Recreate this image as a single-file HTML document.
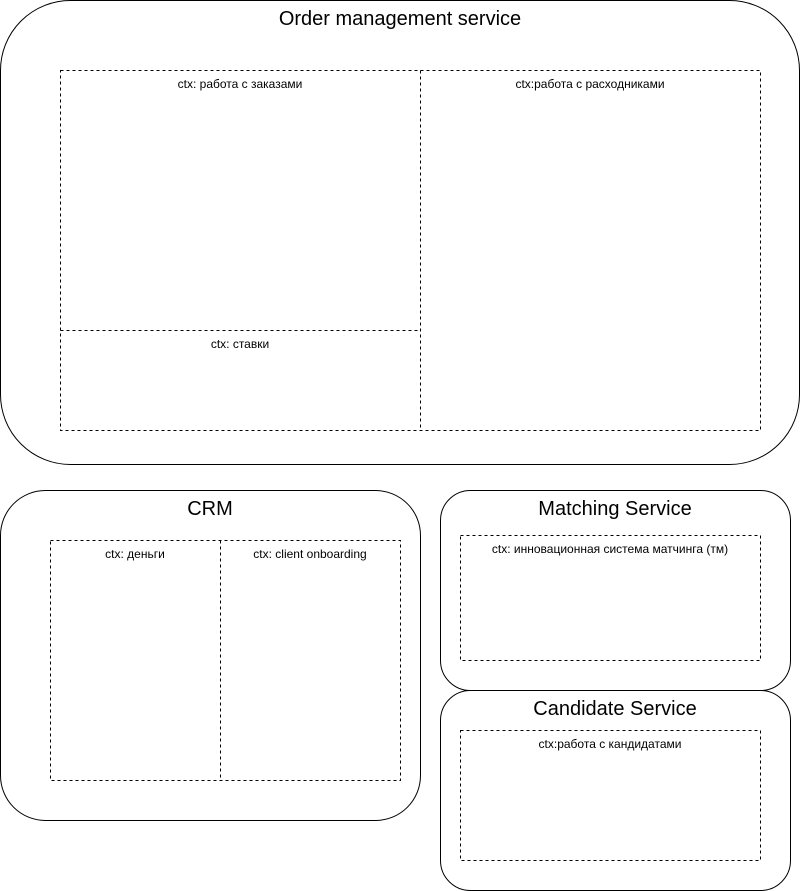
<!DOCTYPE html>
<html><head><meta charset="utf-8"><style>
html,body{margin:0;padding:0;background:#fff;}
svg{display:block;}
text{font-family:"Liberation Sans","DejaVu Sans",sans-serif;fill:#000;}
.t{font-size:20px;}
.s{font-size:12px;}
</style></head><body>
<svg width="801" height="891" viewBox="0 0 801 891" xmlns="http://www.w3.org/2000/svg">
<g fill="none" stroke="#000" stroke-width="1">
<rect x="0.5" y="0.5" width="799" height="464" rx="70" ry="70"/>
<g stroke-dasharray="3,3">
<rect x="60.5" y="70.5" width="700" height="360"/>
<line x1="420.5" y1="70.5" x2="420.5" y2="430.5"/>
<line x1="60.5" y1="330.5" x2="420.5" y2="330.5"/>
</g>
<rect x="0.5" y="490.5" width="420" height="330" rx="45" ry="45"/>
<g stroke-dasharray="3,3">
<rect x="50.5" y="540.5" width="350" height="240"/>
<line x1="220.5" y1="540.5" x2="220.5" y2="780.5"/>
</g>
<rect x="440.5" y="490.5" width="350" height="200" rx="30" ry="30"/>
<rect x="460.5" y="535.5" width="300" height="125" stroke-dasharray="3,3"/>
<rect x="440.5" y="690.5" width="350" height="200" rx="30" ry="30"/>
<rect x="460.5" y="730.5" width="300" height="130" stroke-dasharray="3,3"/>
</g>
<g text-anchor="middle">
<text class="t" x="400" y="25">Order management service</text>
<text class="s" x="240" y="88">ctx: работа с заказами</text>
<text class="s" x="590" y="88">ctx:работа с расходниками</text>
<text class="s" x="240" y="348">ctx: ставки</text>
<text class="t" x="210" y="515">CRM</text>
<text class="s" x="135" y="558">ctx: деньги</text>
<text class="s" x="310" y="558">ctx: client onboarding</text>
<text class="t" x="615" y="515">Matching Service</text>
<text class="s" x="610" y="553">ctx: инновационная система матчинга (тм)</text>
<text class="t" x="615" y="715">Candidate Service</text>
<text class="s" x="610" y="748">ctx:работа с кандидатами</text>
</g>
</svg>
</body></html>
